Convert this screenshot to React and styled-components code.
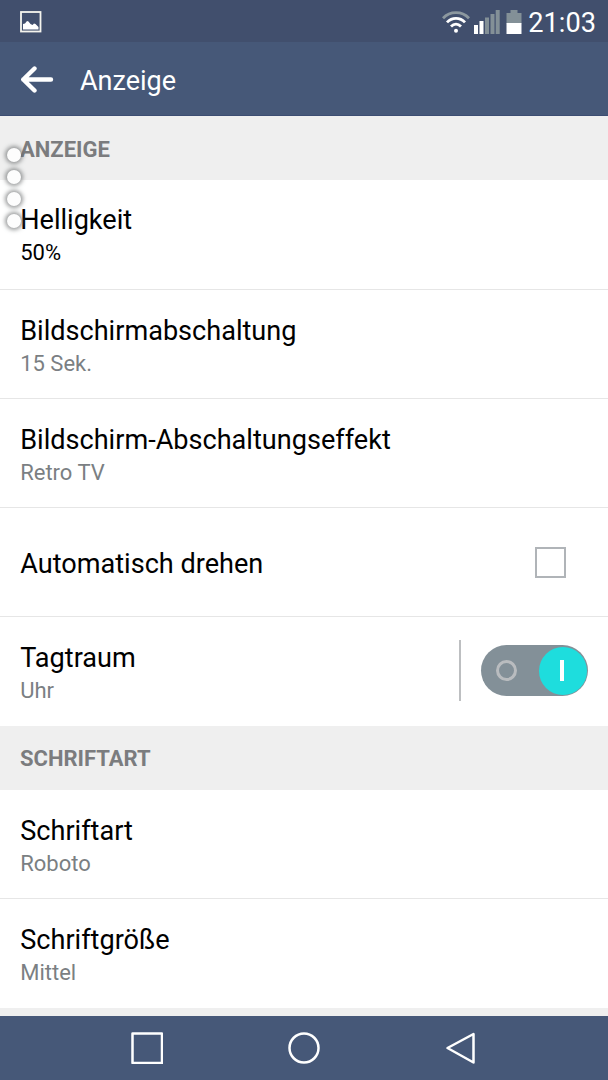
import styled, { createGlobalStyle } from 'styled-components';

const GlobalStyle = createGlobalStyle`
	* {
		box-sizing: border-box;
	}

	body {
		margin: 0;
		font-family: Roboto, sans-serif;
		background: #efefef;
	}
`;

const Screen = styled.div`
	position: relative;
	display: flex;
	flex-direction: column;
	width: 608px;
	height: 1080px;
	overflow: hidden;
	background: #efefef;
`;

const StatusBar = styled.div`
	display: flex;
	align-items: center;
	justify-content: space-between;
	flex: none;
	height: 42px;
	padding: 1px 12px 0 20px;
	background: #414f6d;
`;

const StatusIcons = styled.div`
	display: flex;
	align-items: center;
	gap: 4px;

	svg {
		display: block;
	}
`;

const Clock = styled.span`
	margin: 2px 0 0 2px;
	font-size: 27.2px;
	line-height: 32px;
	color: white;
`;

const AppBar = styled.header`
	display: flex;
	align-items: center;
	flex: none;
	height: 74px;
	padding: 0 20px;
	gap: 26px;
	background: #465878;
	border-bottom: 1px solid #3c4d72;
`;

const AppTitle = styled.h1`
	margin: 4px 0 0;
	font-size: 27px;
	font-weight: 400;
	line-height: 32px;
	color: white;
`;

const SectionTitle = styled.h2`
	flex: none;
	height: 64px;
	margin: 0;
	padding: ${props => props.$offset}px 20px 0;
	font-size: 22px;
	font-weight: 700;
	line-height: 64px;
	color: #7b7c7e;
	background: #efefef;
`;

const Row = styled.div`
	display: flex;
	align-items: center;
	justify-content: space-between;
	flex: none;
	height: ${props => props.$height || 109}px;
	padding: 0 20px;
	background: white;
	border-bottom: ${props => props.$last ? 0 : '1px solid #e6e6e6'};
`;

const Texts = styled.div`
	padding: ${props => props.$offset}px 0 0 0.2px;
`;

const Label = styled.div`
	font-size: 27.1px;
	line-height: 32px;
	color: black;
`;

const Value = styled.div`
	font-size: 22px;
	line-height: 33px;
	color: ${props => props.$dark ? '#000' : '#7b7f83'};
`;

const Checkbox = styled.div`
	width: 31px;
	height: 31px;
	margin-right: 22px;
	border: 2px solid #b0b4b8;
`;

const SwitchArea = styled.div`
	display: flex;
	align-items: center;
	height: 61px;
	margin-bottom: 2px;
	padding-left: 20px;
	border-left: 2px solid #bdbfc1;
`;

const Switch = styled.div`
	display: flex;
	align-items: center;
	justify-content: space-between;
	width: 107px;
	height: 51px;
	padding: 0 1px 0 15px;
	border-radius: 26px;
	background: #839098;
`;

const OffMark = styled.span`
	width: 21px;
	height: 21px;
	border: 3px solid #b9bcbf;
	border-radius: 50%;
`;

const Knob = styled.span`
	display: flex;
	align-items: center;
	justify-content: center;
	width: 48px;
	height: 48px;
	border-radius: 50%;
	background: #1edddd;

	&::after {
		content: '';
		width: 4px;
		height: 21px;
		margin-right: 2px;
		background: white;
	}
`;

// floating handle that lies over the list
const Dots = styled.div`
	position: absolute;
	top: 148px;
	left: 7px;
	display: flex;
	flex-direction: column;
	gap: 8px;
`;

const Dot = styled.span`
	width: 14px;
	height: 14px;
	border-radius: 50%;
	background: #fdfdfd;
	box-shadow: 0 0 4px 2px rgba(95, 98, 100, .65);
`;

const NavBar = styled.nav`
	display: flex;
	justify-content: space-between;
	align-items: center;
	height: 64px;
	margin-top: auto;
	padding: 0 131px;
	background: #465878;
`;

const PictureIcon = () => (
	<svg width="22" height="22" viewBox="0 0 22 22">
		<rect x="1" y="1" width="19.5" height="19.5" fill="none" stroke="#f4f4ee" strokeWidth="1.8" />
		<path d="M3 18.5V13l2-.5L7 10l1.5.5 2 2.5 2 1 1.5-1.5 1.5.5 3 3v2.5z" fill="white" />
	</svg>
);

const WifiIcon = () => (
	<svg width="28" height="24" viewBox="0 0 28 24" fill="none" strokeWidth="2.8">
		<path d="M1 8.2C8 .8 20 .8 27 8.2" stroke="#8c989f" />
		<path d="M5 12.4c5-5.4 13-5.4 18 0M9 16.4c3-3 7-3 10 0" stroke="white" />
		<circle cx="14" cy="20.8" r="2" fill="white" />
	</svg>
);

const SignalIcon = () => (
	<svg width="28" height="24" viewBox="0 0 28 24">
		<path d="M0 15h4v9H0zM5.5 11h4v13h-4z" fill="white" />
		<path d="M11 7.5h4V24h-4zM16.5 4h4v20h-4zM21.7 0h4v24h-4z" fill="#839097" />
	</svg>
);

const BatteryIcon = () => (
	<svg width="16" height="24" viewBox="0 0 16 24">
		<path d="M4.5 0h7v3h4v10.5H.5V3h4z" fill="#839097" />
		<path d="M.5 13h15v11H.5z" fill="white" />
	</svg>
);

const BackArrow = () => (
	<svg width="34" height="28" viewBox="0 0 34 28" fill="none" stroke="white" strokeWidth="4.4" strokeLinecap="round" strokeLinejoin="round">
		<path d="M31 14.5H3.3M14.5 3.5L3.3 14.5L14.5 25.5" />
	</svg>
);

const NavIcon = ({ children }) => (
	<svg width="32" height="32" viewBox="0 0 32 32" fill="none" stroke="white" strokeWidth="2.5" strokeLinejoin="round">
		{children}
	</svg>
);

const Setting = ({ label, value, dark, height, last, offset = 6, children }) => (
	<Row $height={height} $last={last}>
		<Texts $offset={offset}>
			<Label>{label}</Label>
			{value && <Value $dark={dark}>{value}</Value>}
		</Texts>
		{children}
	</Row>
);

const App = () => {
	return (
		<Screen>
			<GlobalStyle />

			<StatusBar>
				<PictureIcon />
				<StatusIcons>
					<WifiIcon />
					<SignalIcon />
					<BatteryIcon />
					<Clock>21:03</Clock>
				</StatusIcons>
			</StatusBar>

			<AppBar>
				<BackArrow />
				<AppTitle>Anzeige</AppTitle>
			</AppBar>

			<SectionTitle $offset={2}>ANZEIGE</SectionTitle>
			<Setting label="Helligkeit" value="50%" dark height={110} offset={3} />
			<Setting label="Bildschirmabschaltung" value="15 Sek." />
			<Setting label="Bildschirm-Abschaltungseffekt" value="Retro TV" />
			<Setting label="Automatisch drehen" offset={4}>
				<Checkbox />
			</Setting>
			<Setting label="Tagtraum" value="Uhr" last>
				<SwitchArea>
					<Switch>
						<OffMark />
						<Knob />
					</Switch>
				</SwitchArea>
			</Setting>

			<SectionTitle $offset={1}>SCHRIFTART</SectionTitle>
			<Setting label="Schriftart" value="Roboto" />
			<Setting label="Schriftgröße" value="Mittel" last />

			<NavBar>
				<NavIcon>
					<rect x="1.5" y="1.5" width="29.5" height="29.5" />
				</NavIcon>
				<NavIcon>
					<circle cx="16" cy="16" r="14.5" />
				</NavIcon>
				<NavIcon>
					<path d="M28.5 2v28.5L2.5 16z" />
				</NavIcon>
			</NavBar>

			<Dots>
				<Dot />
				<Dot />
				<Dot />
				<Dot />
			</Dots>
		</Screen>
	)
}

export default App
